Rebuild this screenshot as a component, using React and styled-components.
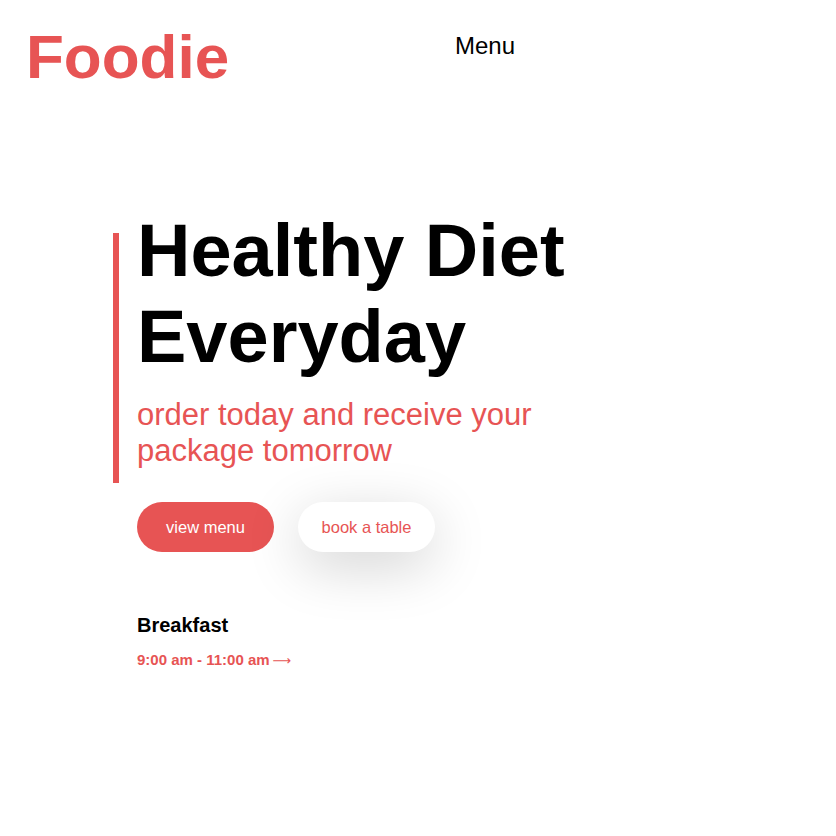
import React from "react";
import styled, { createGlobalStyle } from "styled-components";

const red = "#e75454";

const GlobalStyle = createGlobalStyle`
  * { box-sizing: border-box; }
  body {
    margin: 0;
    background: #fff;
    font-family: "Liberation Sans", Arial, sans-serif;
    color: #000;
  }
`;

const Header = styled.header`
  display: flex;
  align-items: flex-start;
  padding: 20px 26px 0;
  height: 110px;
`;

const Logo = styled.h1`
  margin: 0;
  font-size: 62px;
  line-height: 74px;
  font-weight: 700;
  color: ${red};
  width: 429px;
`;

const NavLink = styled.a`
  margin-top: 10px;
  font-size: 24px;
  line-height: 32px;
  color: #000;
  text-decoration: none;
`;

const Hero = styled.section`
  padding: 123px 0 0 113px;
`;

const Intro = styled.div`
  display: flow-root;
  border-left: 6px solid ${red};
  padding: 0 0 14px 18px;
  width: 474px;
`;

const Title = styled.h2`
  margin: -25px 0 0;
  font-size: 74px;
  line-height: 86px;
  font-weight: 700;
`;

const Subtitle = styled.p`
  margin: 0;
  padding-top: 17px;
  font-size: 31px;
  line-height: 36px;
  color: ${red};
`;

const Actions = styled.div`
  display: flex;
  gap: 24px;
  padding: 19px 0 0 24px;
`;

const Button = styled.button`
  width: 137px;
  height: 50px;
  border: none;
  border-radius: 25px;
  font-family: inherit;
  font-size: 16.5px;
  cursor: pointer;
  background: ${(p) => (p.$primary ? red : "#fff")};
  color: ${(p) => (p.$primary ? "#fff" : red)};
  box-shadow: ${(p) =>
    p.$primary ? "none" : "0 14px 56px rgba(0, 0, 0, 0.18)"};
`;

const Meal = styled.div`
  padding: 61px 0 0 24px;
`;

const MealName = styled.h3`
  margin: 0;
  font-size: 20px;
  line-height: 24px;
  font-weight: 700;
`;

const MealTime = styled.p`
  margin: 14px 0 0;
  font-size: 15px;
  font-weight: 700;
  color: ${red};
`;

const Arrow = styled.span`
  font-family: "DejaVu Sans", sans-serif;
  font-weight: 400;
  font-size: 13px;
  margin-left: 3px;
`;

export default function App() {
  return (
    <>
      <GlobalStyle />
      <Header>
        <Logo>Foodie</Logo>
        <NavLink href="#">Menu</NavLink>
      </Header>
      <Hero>
        <Intro>
          <Title>Healthy Diet Everyday</Title>
          <Subtitle>order today and receive your package tomorrow</Subtitle>
        </Intro>
        <Actions>
          <Button $primary>view menu</Button>
          <Button>book a table</Button>
        </Actions>
        <Meal>
          <MealName>Breakfast</MealName>
          <MealTime>
            9:00 am - 11:00 am<Arrow>⟶</Arrow>
          </MealTime>
        </Meal>
      </Hero>
    </>
  );
}
